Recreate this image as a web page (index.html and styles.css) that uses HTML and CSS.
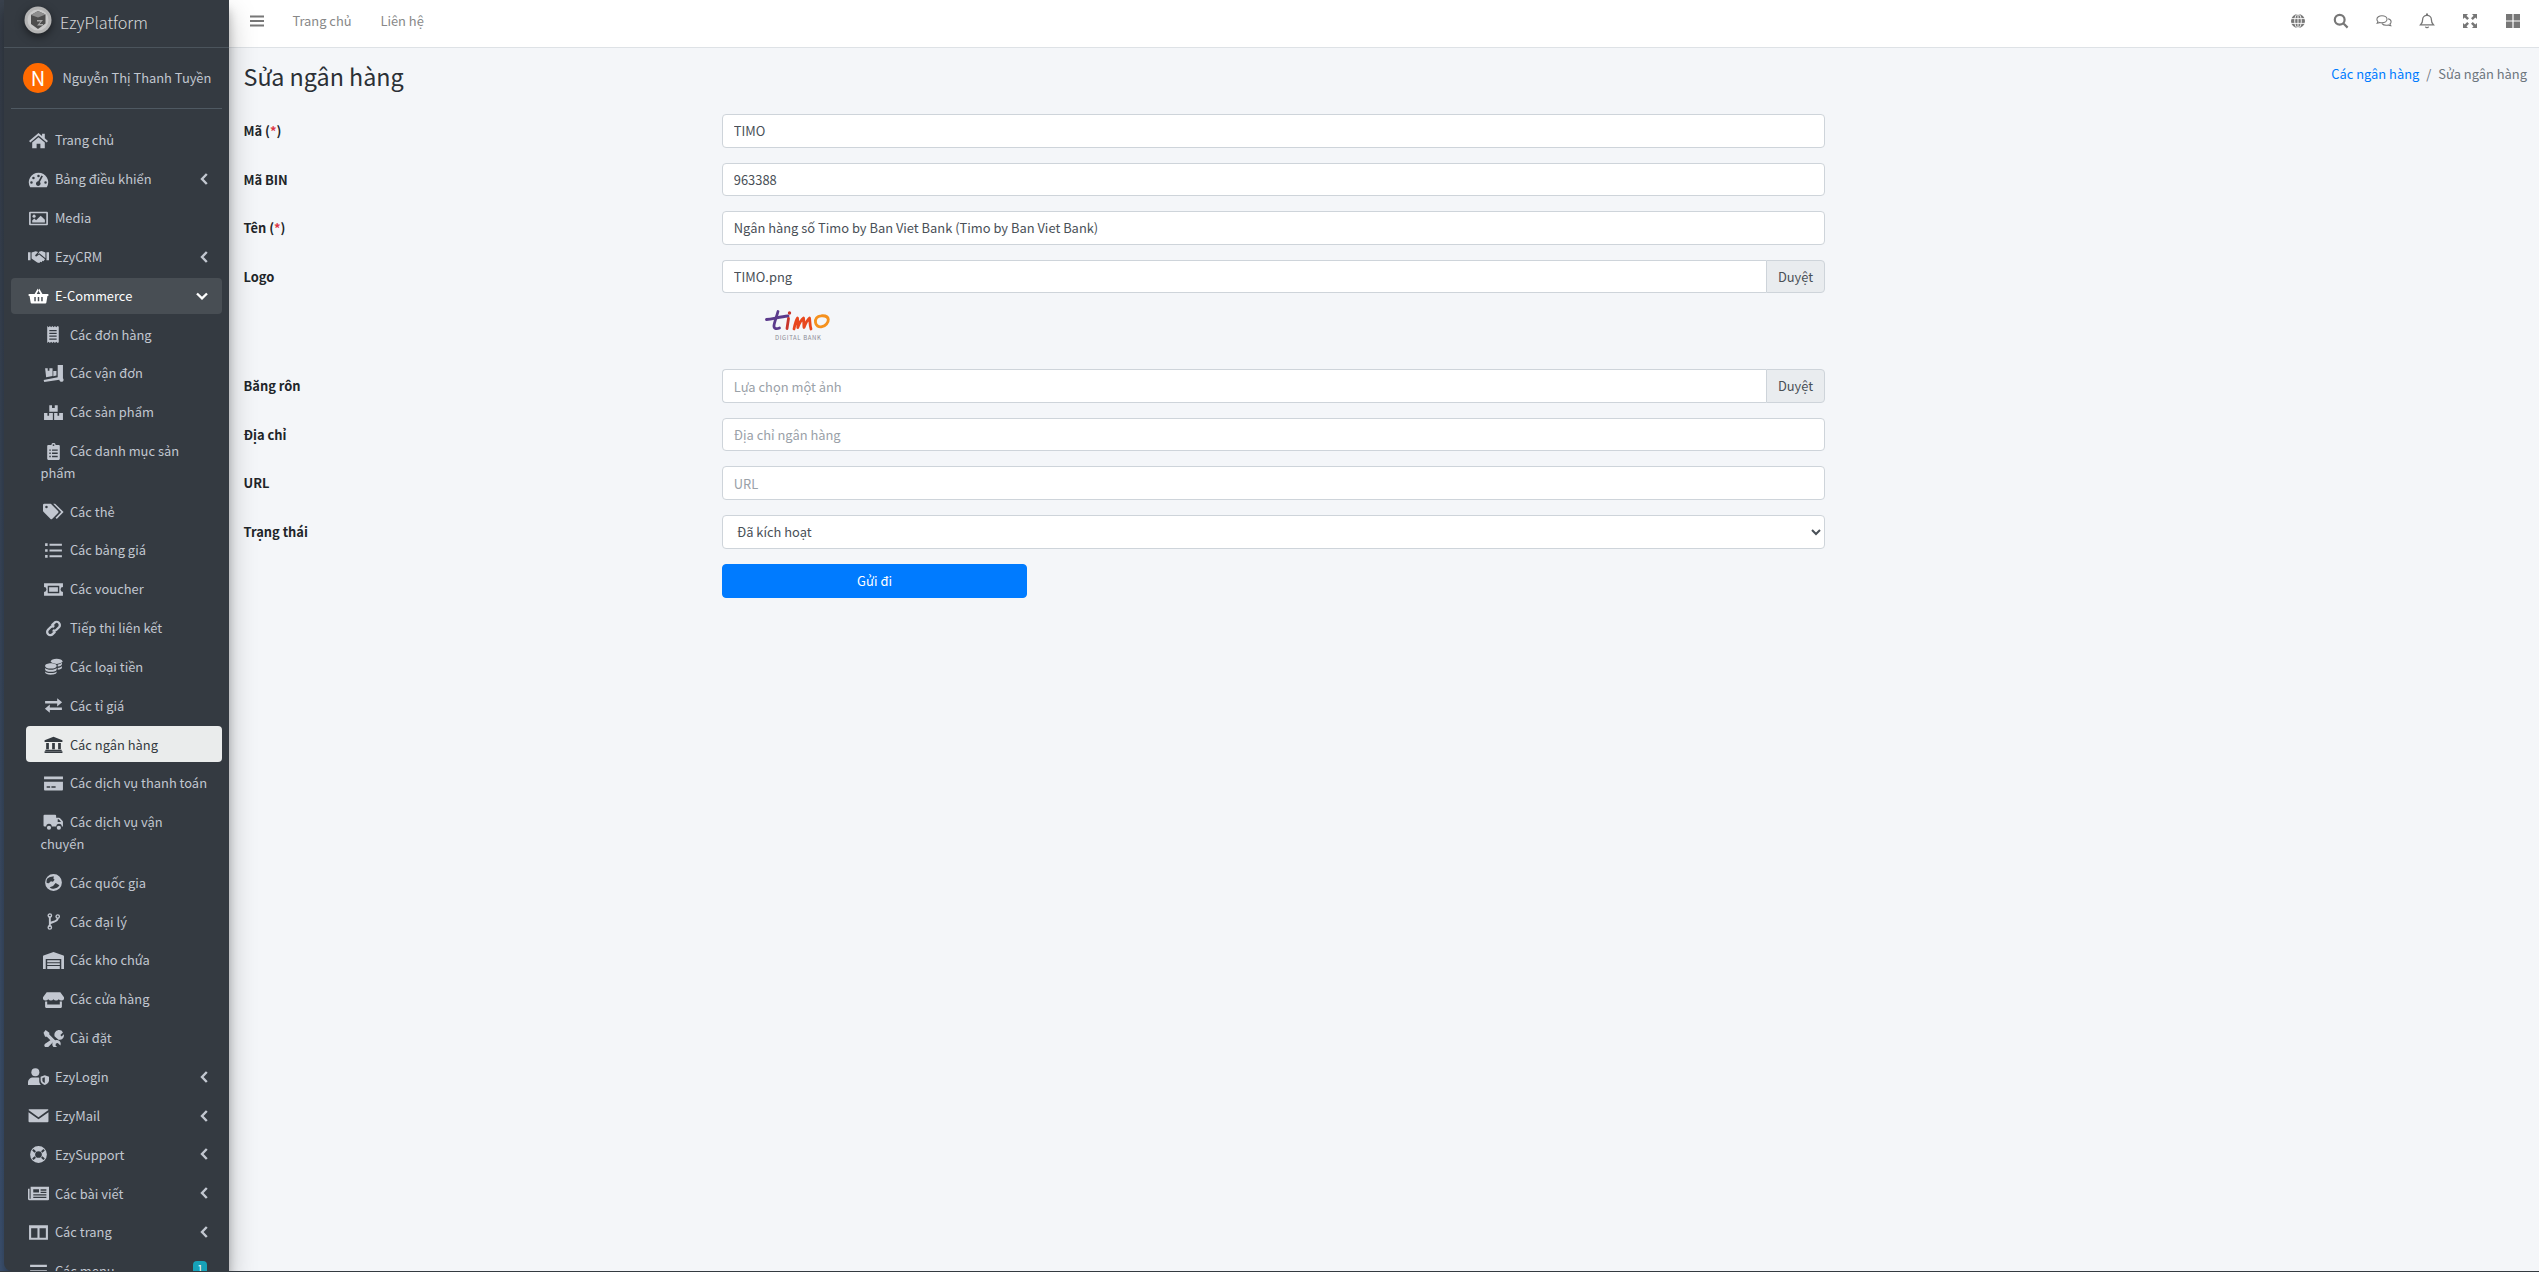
FILE: index.html
```html
<!DOCTYPE html>
<html lang="vi">
<head>
<meta charset="utf-8">
<title>Sửa ngân hàng</title>
<link rel="stylesheet" href="styles.css">
</head>
<body>
<svg class="defs" aria-hidden="true">
<defs>
<symbol id="i-home" viewBox="0 0 20 16"><path d="M10 0.8 1 8.4l1.2 1.4L10 3.2l7.8 6.6L19 8.4l-3-2.5V1.6h-2.6v2.1z"/><path d="M4 10 10 4.9l6 5.1v5.4h-4.2v-4.4H8.2v4.4H4z"/></symbol>
<symbol id="i-gauge" viewBox="0 0 20 16"><path fill-rule="evenodd" d="M10 1.5a9.2 9.2 0 0 0-7.9 13.9h15.8A9.2 9.2 0 0 0 10 1.5zM10 3.4a1.2 1.2 0 1 1 0 2.4 1.2 1.2 0 0 1 0-2.4zM5.2 5.3a1.2 1.2 0 1 1 0 2.4 1.2 1.2 0 0 1 0-2.4zM3.3 9.7a1.2 1.2 0 1 1 0 2.4 1.2 1.2 0 0 1 0-2.4zM16.7 9.7a1.2 1.2 0 1 1 0 2.4 1.2 1.2 0 0 1 0-2.4zM14.2 5 11.3 10.3a2.2 2.2 0 1 1-1.5-.6l3-5.4z"/></symbol>
<symbol id="i-image" viewBox="0 0 20 16"><path fill-rule="evenodd" d="M2 1.5h16a1 1 0 0 1 1 1v11a1 1 0 0 1-1 1H2a1 1 0 0 1-1-1v-11a1 1 0 0 1 1-1zM2.6 3.1v9.8h14.8V3.1z"/><circle cx="5.8" cy="5.8" r="1.5"/><path d="M4 11.700V9.800L6 8l1.700 1.600 4.400-4.300 4 4v2.400z"/></symbol>
<symbol id="i-hands" viewBox="0 0 20 16"><path d="M0 4h2.400v7.600H0zM17.600 4H20v7.600h-2.400z"/><path d="M3.400 4.200 7.400 3l2.200.8-2.600 2.700c-.6.8.5 1.800 1.300 1.200L10.600 6l5.600 4.600-1.500 2-1-.6-.6 1.400-1.400-.4-.9 1.200-2-.5-5.400-3.700z"/><path d="M11 3.200l2-.4 3.600 1.400v5.400l-5.800-4.800-1.600 1.300z"/></symbol>
<symbol id="i-basket" viewBox="0 0 20 16"><path d="M6 7 9.200 1.500l1.400.8L8 7zM14 7l-3.200-5.500-1.400.8L12 7z"/><path fill-rule="evenodd" d="M.6 6.500h18.800v2H18.500l-1 6.200a1 1 0 0 1-1 .8H3.500a1 1 0 0 1-1-.8l-1-6.200H.6zM6 9.500v4h1.400v-4zM9.300 9.500v4h1.400v-4zM12.600 9.500v4H14v-4z"/></symbol>
<symbol id="i-receipt" viewBox="0 0 20 16"><path fill-rule="evenodd" d="M4 0l1.300 1L6.600 0l1.100 1L9 0l1.100 1L11.400 0l1.200 1L14 0l1 .6v14.800l-1 .6-1.400-1-1.200 1-1.300-1L9 16l-1.300-1-1.100 1-1.300-1L4 16zM6 3.600v1.200h7V3.600zM6 6.300v1.200h7V6.300zM6 9v1.200h7V9zM6 11.700v1.200h7v-1.200z"/></symbol>
<symbol id="i-dolly" viewBox="0 0 20 16"><path d="M14 0h5v12.500a2 2 0 1 1-3.400 1.400L1.200 16 .6 14.200l13.400-2.600z"/><path d="M2 3h2.500v2.400h1.600V3h3v7.400L3 11.600z"/><path d="M9.800 5.500h3v4.400l-3 .6z"/></symbol>
<symbol id="i-boxes" viewBox="0 0 20 16"><path d="M6 1h2.600v2.600h2.600V1H14v6.400H6zM1 8.400h3.200V11h1.600V8.400h3.600v6.800H1zM10.600 8.400h3.200V11h1.600V8.400H19v6.800h-8.400z"/></symbol>
<symbol id="i-clip" viewBox="0 0 20 16"><path fill-rule="evenodd" d="M8 1.800a2 2 0 0 1 4 0h3a1 1 0 0 1 1 1V15a1 1 0 0 1-1 1H5a1 1 0 0 1-1-1V2.800a1 1 0 0 1 1-1zM10 1a.9.9 0 1 0 0 1.800A.9.9 0 0 0 10 1zM6 6v1.400h1.400V6zM6 9v1.400h1.400V9zM6 12v1.400h1.400V12zM8.600 6v1.400H14V6zM8.600 9v1.400H14V9zM8.600 12v1.400H14V12z"/></symbol>
<symbol id="i-tags" viewBox="0 0 20 16"><path fill-rule="evenodd" d="M0 1.800A1.300 1.300 0 0 1 1.300.5h5.400c.4 0 .7.1 1 .4l6.600 6.600a1.300 1.300 0 0 1 0 1.900l-5.400 5.400a1.300 1.300 0 0 1-1.900 0L.4 8.200A1.300 1.300 0 0 1 0 7.300zM3.300 2.600a1.200 1.200 0 1 0 0 2.400 1.200 1.200 0 0 0 0-2.400z"/><path d="M9.700.5h1.100c.4 0 .7.1 1 .4l7.800 7.600-6.500 6.600-1.100-1.100 5.300-5.500z"/></symbol>
<symbol id="i-list" viewBox="0 0 20 16"><path d="M2 1.200h2.400v2.600H2zM2 6.700h2.400v2.600H2zM2 12.200h2.400v2.600H2zM6.200 1.600H18v1.800H6.200zM6.200 7.100H18v1.800H6.200zM6.200 12.600H18v1.800H6.200z"/></symbol>
<symbol id="i-ticket" viewBox="0 0 20 16"><path fill-rule="evenodd" d="M1 2h18v3.700a2.300 2.300 0 0 0 0 4.600V14H1v-3.700a2.300 2.300 0 0 0 0-4.600zM4.500 4.500v7h11v-7zM5.800 5.800h8.400v4.400H5.800z"/></symbol>
<symbol id="i-link" viewBox="0 0 20 16"><path fill="none" stroke="currentColor" stroke-width="2.200" d="M8.400 5 10.800 2.600a3 3 0 0 1 4.400 4.200l-2.400 2.400a3 3 0 0 1-3.600.5M11.600 11l-2.400 2.400a3 3 0 0 1-4.400-4.200l2.400-2.400a3 3 0 0 1 3.600-.5"/></symbol>
<symbol id="i-coins" viewBox="0 0 20 16"><ellipse cx="13" cy="3" rx="5.500" ry="2.500"/><path d="M2 7.500c0-1.500 2.500-2.500 5.500-2.500s5.500 1 5.500 2.500S10.500 10 7.500 10 2 9 2 7.500zM2 9.500c1 1 3 1.700 5.500 1.700s4.500-.7 5.500-1.700v1.300C13 12.200 10.500 13 7.500 13S2 12.200 2 10.800zM2 12.700c1 1 3 1.500 5.500 1.500s4.500-.5 5.500-1.500v.8c0 1.400-2.500 2.300-5.500 2.300S2 15 2 13.500zM14 6.300c1.700-.3 3-1 4-1.800v1.400c0 1-1.600 1.800-4 2.200zM14 9.500c1.700-.3 3-1 4-1.800v1.500c0 1-1.600 1.700-4 2z"/></symbol>
<symbol id="i-swap" viewBox="0 0 20 16"><path d="M2 3.700h11.500V1l4.700 4-4.700 4V6.200H2zM18 9.800H6.500V7L1.800 11l4.700 4v-2.700H18z"/></symbol>
<symbol id="i-bank" viewBox="0 0 20 16"><path d="M10 .5 18.500 4v1.500h-17V4zM3 6.500h2.600v6H3zM8.700 6.500h2.600v6H8.700zM14.400 6.500H17v6h-2.600zM2.200 13h15.600v1.200H2.200zM1.500 14.400h17V16h-17z"/></symbol>
<symbol id="i-card" viewBox="0 0 20 16"><path fill-rule="evenodd" d="M1 1.300h18v2.600H1zM1 6.400h18v7.400a.8.8 0 0 1-.8.8H1.800a.8.8 0 0 1-.8-.8zM3.500 10.500V12h3.300v-1.500zM8 10.500V12h4v-1.500z"/></symbol>
<symbol id="i-truck" viewBox="0 0 20 16"><path fill-rule="evenodd" d="M.5 1.500a1 1 0 0 1 1-1h10a1 1 0 0 1 1 1v2h2.800c.4 0 .7.2 1 .4l2.400 2.600c.2.300.3.600.3 1v4.300h-1.100a2.600 2.600 0 0 0-5.200 0H8.300a2.600 2.600 0 0 0-5.200 0H1.500a1 1 0 0 1-1-1zM14 5v2.600h3.200L15 5z"/><circle cx="5.700" cy="13" r="2"/><circle cx="15.100" cy="13" r="2"/></symbol>
<symbol id="i-globe" viewBox="0 0 20 16"><path fill-rule="evenodd" d="M10 0a8 8 0 1 0 0 16 8 8 0 0 0 0-16zM4 4.500C6 2.500 8.500 2 10.500 2.300L9.800 4 11 5.400 9.500 7.200 7.500 6.800 5.500 8.800 3.500 8.500C3.300 7 3.300 5.700 4 4.500zM12 8.500l3.600 2.200c-1.200 2-3 3-5.400 3.200-1.500 0-3-.4-3.800-1.400l3.200-1.200z"/></symbol>
<symbol id="i-branch" viewBox="0 0 20 16"><path fill="none" stroke="currentColor" stroke-width="1.800" d="M6.500 3v10M6.500 10.500c0-2.500 7.500-1.500 7.500-5.500"/><circle cx="6.500" cy="2.400" r="1.600" fill="none" stroke="currentColor" stroke-width="1.300"/><circle cx="6.500" cy="13.600" r="1.600" fill="none" stroke="currentColor" stroke-width="1.300"/><circle cx="14" cy="3.300" r="1.600" fill="none" stroke="currentColor" stroke-width="1.300"/></symbol>
<symbol id="i-ware" viewBox="0 0 20 16"><path fill-rule="evenodd" d="M10 0 19.500 3.300c.3.100.5.300.5.600V16h-2.600V6.500H2.600V16H0V3.900c0-.3.200-.5.500-.6zM4 7.800h12v1.800H4zM4 10.500h12v1.800H4zM4 13.200h12V16H4z"/></symbol>
<symbol id="i-store" viewBox="0 0 20 16"><path d="M3.500 1h13L20 5.800a2.600 2.600 0 0 1-2 3.200h-.5a3 3 0 0 1-2.500-1.300A3 3 0 0 1 12.500 9a3 3 0 0 1-2.500-1.300A3 3 0 0 1 7.500 9 3 3 0 0 1 5 7.700 3 3 0 0 1 2.500 9H2A2.600 2.600 0 0 1 0 5.800z"/><path d="M2 10h2v2.800h12V10h2v5a1 1 0 0 1-1 1H3a1 1 0 0 1-1-1z"/></symbol>
<symbol id="i-tools" viewBox="0 0 20 16"><path d="M2.500 0 6 2.500v1.700l5.500 5.500a3.800 3.800 0 0 1 5 5l-2.400-2.300-1.800.4-.4 1.800 2.300 2.300a3.800 3.800 0 0 1-5-5L3.700 6.400H2L.5 2.500z"/><path d="M15.500 0a4 4 0 0 1 3.500 2.200L16.500 4.700l1.300 1.300L19.700 4a4 4 0 0 1-4.900 5.100L12.500 7.300 11 5.800c-.7-2.900 1.300-5.800 4.500-5.800zM7.700 9.300 9.700 11.300 5 16.100a2.100 2.100 0 0 1-3-3z"/></symbol>
<symbol id="i-ushield" viewBox="0 0 20 16"><circle cx="7" cy="4" r="3.800"/><path d="M0 16v-2.300C0 11 2 9 5 9h4c.6 0 1.200.1 1.700.3v3c0 1.500.7 2.700 1.500 3.700z"/><path fill-rule="evenodd" d="M16 6.800 12 8.300v3.600c0 2 2 3.500 4 4.100 2-.6 4-2.100 4-4.100V8.300zM16 8.600v5.600c-1.200-.5-2.300-1.300-2.300-2.400V9.500z"/></symbol>
<symbol id="i-mail" viewBox="0 0 20 16"><path d="M1.500 2h17c.5 0 1 .3 1 .8L10 9.700.5 2.800c0-.5.5-.8 1-.8z"/><path d="M.5 4.800 10 11.500l9.500-6.700v8.700a1 1 0 0 1-1 1h-17a1 1 0 0 1-1-1z"/></symbol>
<symbol id="i-ring" viewBox="0 0 20 16"><path fill-rule="evenodd" d="M10 0a8 8 0 1 0 0 16 8 8 0 0 0 0-16zM10 4.800a3.200 3.200 0 1 1 0 6.400 3.200 3.200 0 0 1 0-6.400zM5.300 2.800 7.600 5 6.200 6.400 4 4.200C4.300 3.700 4.800 3.200 5.300 2.800zM14.700 2.800c.5.400 1 .9 1.300 1.400L13.800 6.400 12.400 5zM6.200 9.600 7.600 11l-2.300 2.200c-.5-.4-1-.9-1.300-1.400zM13.800 9.600 16 11.800c-.3.500-.8 1-1.300 1.400L12.400 11z"/></symbol>
<symbol id="i-news" viewBox="0 0 20 16"><path fill-rule="evenodd" d="M2.500 1.500H20v12a1 1 0 0 1-1 1H1.500A1.500 1.500 0 0 1 0 13V3.500h1.500V13h1zM5 4v3h5.500V4zM12 4v1.300h5.500V4zM12 6.300v1.300h5.500V6.300zM5 8.700V10h12.500V8.700zM5 11v1.300h12.500V11z"/></symbol>
<symbol id="i-cols" viewBox="0 0 20 16"><path fill-rule="evenodd" d="M1 1h18v14H1zM3 4v9h6V4zM11 4v9h6V4z"/></symbol>
<symbol id="i-bars" viewBox="0 0 20 16"><path d="M2 1.500h16v2.200H2zM2 6.900h16v2.200H2zM2 12.300h16v2.200H2z"/></symbol>
<symbol id="t-globe" viewBox="0 0 16 16"><path d="M8 1a7 7 0 1 0 0 14A7 7 0 0 0 8 1z"/><g fill="none" stroke="#fff" stroke-width=".9"><path d="M1 5.600h14M1 10.400h14M8 1v14"/><ellipse cx="8" cy="8" rx="3.300" ry="7"/></g></symbol>
<symbol id="t-search" viewBox="0 0 16 16"><path fill="none" stroke="currentColor" stroke-width="2.200" d="M6.700 1.800a4.900 4.900 0 1 0 0 9.800 4.900 4.900 0 0 0 0-9.800zM10.300 10.300l4.300 4.300"/></symbol>
<symbol id="t-chat" viewBox="0 0 18 16"><g fill="none" stroke="currentColor" stroke-width="1.200"><path d="M6.700 2C3.500 2 1 3.800 1 6.100c0 1 .5 1.900 1.200 2.600-.2.700-.6 1.400-1 1.900 1 0 2.100-.4 2.900-1 .8.300 1.700.5 2.600.5 3.200 0 5.700-1.800 5.700-4S9.900 2 6.700 2z"/><path d="M13.600 5.500c2 .5 3.400 1.800 3.400 3.400 0 1-.5 1.900-1.300 2.500.2.800.6 1.500 1 2-1 0-2.100-.4-2.900-1-.8.300-1.600.4-2.400.4-2 0-3.700-.7-4.600-1.900"/></g></symbol>
<symbol id="t-bell" viewBox="0 0 16 16"><g fill="none" stroke="currentColor" stroke-width="1.300"><path d="M8 2.300c-2.600 0-4.400 2-4.400 4.400 0 3.400-1.500 4.300-2.200 5.200h13.200c-.7-.9-2.200-1.800-2.200-5.200 0-2.400-1.800-4.400-4.400-4.400z"/><path d="M6.500 13.600c.2.700.8 1.100 1.500 1.100s1.300-.4 1.500-1.100"/></g><path d="M7 .6h2v2H7z"/></symbol>
<symbol id="t-expand" viewBox="0 0 16 16"><path d="M1 1h5L4.500 2.700 7 5.200 5.200 7 2.700 4.500 1 6zM15 1v5l-1.700-1.500L10.800 7 9 5.200l2.500-2.500L10 1zM1 15v-5l1.700 1.500L5.200 9 7 10.800l-2.500 2.500L6 15zM15 15h-5l1.500-1.700L9 10.800 10.800 9l2.500 2.500L15 10z"/></symbol>
<symbol id="t-grid" viewBox="0 0 16 16"><path d="M1 1h6.400v6.400H1zM8.600 1H15v6.400H8.600zM1 8.600h6.400V15H1zM8.600 8.600H15V15H8.600z"/></symbol>
<symbol id="c-left" viewBox="0 0 10 14"><path fill="none" stroke="currentColor" stroke-width="2.400" d="M7.800 2 3 7l4.800 5"/></symbol>
<symbol id="c-down" viewBox="0 0 14 10"><path fill="none" stroke="currentColor" stroke-width="2.400" d="M2 2.500 7 7.300l5-4.800"/></symbol>
</defs>
</svg>

<div class="app">
  <aside class="sidebar">
    <a class="brand">
      <svg class="brand-logo" viewBox="0 0 28 28" width="28" height="28"><circle cx="14" cy="14" r="13.500" fill="#b4b4b4"/><circle cx="14" cy="14" r="10.500" fill="#c9c9c9"/><path d="M14 5 21.500 8.500v9L14 23l-7-5V9z" fill="#4d4d4d"/><path d="M14 5 21.500 8.500 14 11.500 7 9z" fill="#8e8e8e"/><path d="M13 14h6l-3.500 4H19v1.500h-6l3.500-4H13z" fill="#a8a8a8"/></svg>
      <span class="brand-text">EzyPlatform</span>
    </a>
    <div class="user-panel">
      <span class="avatar">N</span>
      <span class="user-name">Nguyễn Thị Thanh Tuyền</span>
    </div>
    <ul class="nav">
      <li><a class="nav-link"><svg class="ic"><use href="#i-home"/></svg>Trang chủ</a></li>
      <li><a class="nav-link"><svg class="ic"><use href="#i-gauge"/></svg>Bảng điều khiển<svg class="chev"><use href="#c-left"/></svg></a></li>
      <li><a class="nav-link"><svg class="ic"><use href="#i-image"/></svg>Media</a></li>
      <li><a class="nav-link"><svg class="ic"><use href="#i-hands"/></svg>EzyCRM<svg class="chev"><use href="#c-left"/></svg></a></li>
      <li>
        <a class="nav-link open"><svg class="ic"><use href="#i-basket"/></svg>E-Commerce<svg class="chev-down"><use href="#c-down"/></svg></a>
        <ul class="subnav">
          <li><a class="nav-link"><svg class="ic"><use href="#i-receipt"/></svg>Các đơn hàng</a></li>
          <li><a class="nav-link"><svg class="ic"><use href="#i-dolly"/></svg>Các vận đơn</a></li>
          <li><a class="nav-link"><svg class="ic"><use href="#i-boxes"/></svg>Các sản phẩm</a></li>
          <li><a class="nav-link"><svg class="ic"><use href="#i-clip"/></svg>Các danh mục sản phẩm</a></li>
          <li><a class="nav-link"><svg class="ic"><use href="#i-tags"/></svg>Các thẻ</a></li>
          <li><a class="nav-link"><svg class="ic"><use href="#i-list"/></svg>Các bảng giá</a></li>
          <li><a class="nav-link"><svg class="ic"><use href="#i-ticket"/></svg>Các voucher</a></li>
          <li><a class="nav-link"><svg class="ic"><use href="#i-link"/></svg>Tiếp thị liên kết</a></li>
          <li><a class="nav-link"><svg class="ic"><use href="#i-coins"/></svg>Các loại tiền</a></li>
          <li><a class="nav-link"><svg class="ic"><use href="#i-swap"/></svg>Các tỉ giá</a></li>
          <li><a class="nav-link active"><svg class="ic"><use href="#i-bank"/></svg>Các ngân hàng</a></li>
          <li><a class="nav-link"><svg class="ic"><use href="#i-card"/></svg>Các dịch vụ thanh toán</a></li>
          <li><a class="nav-link"><svg class="ic"><use href="#i-truck"/></svg>Các dịch vụ vận chuyển</a></li>
          <li><a class="nav-link"><svg class="ic"><use href="#i-globe"/></svg>Các quốc gia</a></li>
          <li><a class="nav-link"><svg class="ic"><use href="#i-branch"/></svg>Các đại lý</a></li>
          <li><a class="nav-link"><svg class="ic"><use href="#i-ware"/></svg>Các kho chứa</a></li>
          <li><a class="nav-link"><svg class="ic"><use href="#i-store"/></svg>Các cửa hàng</a></li>
          <li><a class="nav-link"><svg class="ic"><use href="#i-tools"/></svg>Cài đặt</a></li>
        </ul>
      </li>
      <li><a class="nav-link"><svg class="ic"><use href="#i-ushield"/></svg>EzyLogin<svg class="chev"><use href="#c-left"/></svg></a></li>
      <li><a class="nav-link"><svg class="ic"><use href="#i-mail"/></svg>EzyMail<svg class="chev"><use href="#c-left"/></svg></a></li>
      <li><a class="nav-link"><svg class="ic"><use href="#i-ring"/></svg>EzySupport<svg class="chev"><use href="#c-left"/></svg></a></li>
      <li><a class="nav-link"><svg class="ic"><use href="#i-news"/></svg>Các bài viết<svg class="chev"><use href="#c-left"/></svg></a></li>
      <li><a class="nav-link"><svg class="ic"><use href="#i-cols"/></svg>Các trang<svg class="chev"><use href="#c-left"/></svg></a></li>
      <li><a class="nav-link"><svg class="ic"><use href="#i-bars"/></svg>Các menu<span class="badge">1</span></a></li>
    </ul>
  </aside>

  <div class="main">
    <header class="topbar">
      <nav class="top-left">
        <svg class="top-burger" viewBox="0 0 14 12" width="14" height="12"><path d="M0 .6h14v2H0zM0 5h14v2H0zM0 9.400h14v2H0z"/></svg>
        <a class="top-link">Trang chủ</a>
        <a class="top-link">Liên hệ</a>
      </nav>
      <div class="top-right">
        <svg class="top-ic"><use href="#t-globe"/></svg>
        <svg class="top-ic"><use href="#t-search"/></svg>
        <svg class="top-ic"><use href="#t-chat"/></svg>
        <svg class="top-ic"><use href="#t-bell"/></svg>
        <svg class="top-ic"><use href="#t-expand"/></svg>
        <svg class="top-ic"><use href="#t-grid"/></svg>
      </div>
    </header>

    <main class="content">
      <div class="content-head">
        <h1 class="title">Sửa ngân hàng</h1>
        <ol class="crumbs">
          <li><a class="crumb-link">Các ngân hàng</a></li>
          <li class="crumb-sep">/</li>
          <li class="crumb-now">Sửa ngân hàng</li>
        </ol>
      </div>
      <form class="form">
        <div class="row">
          <label class="label">Mã (<span class="req">*</span>)</label>
          <div class="field"><input class="input" value="TIMO"></div>
        </div>
        <div class="row">
          <label class="label">Mã BIN</label>
          <div class="field"><input class="input" value="963388"></div>
        </div>
        <div class="row">
          <label class="label">Tên (<span class="req">*</span>)</label>
          <div class="field"><input class="input" value="Ngân hàng số Timo by Ban Viet Bank (Timo by Ban Viet Bank)"></div>
        </div>
        <div class="row">
          <label class="label">Logo</label>
          <div class="field">
            <div class="input-group"><input class="input joined" value="TIMO.png"><span class="browse">Duyệt</span></div>
            <div class="logo-box">
              <svg class="logo" viewBox="0 0 66 24" width="66" height="24">
                <g fill="none" stroke-linecap="round" stroke-linejoin="round" stroke-width="2.800">
                  <path d="M1.500 10.500C8 9.500 16 8 23 7" stroke="#5b3a8c"/>
                  <path d="M13 2.500C11.500 8 9.500 13 9 16.500c-.3 3 2 4 5.500 2.500" stroke="#5b3a8c"/>
                  <path d="M23.500 9.500 22 19.500" stroke="#c8352b"/>
                  <path d="M29 20C30 15 31 11 32.500 9c.5 3.500.5 7 .3 9.500C34.500 14 36.500 10.500 38.500 9c.6 3.500 0 7 .5 9.500C40.800 14 42.500 10.500 44.500 9c.6 3.500.2 7 1.500 11" stroke="#e8471d"/>
                  <path d="M56 6.800C52 7 50 10 50.500 13.500c.4 3 3 5 6.500 4.200 3.500-.8 6.500-4 6.300-7.200C63 7.500 59.500 6.500 56 6.800z" stroke="#f5911e"/>
                </g>
                <circle cx="24.500" cy="4" r="1.700" fill="#c8352b"/>
              </svg>
              <span class="logo-caption">DIGITAL BANK</span>
            </div>
          </div>
        </div>
        <div class="row">
          <label class="label">Băng rôn</label>
          <div class="field"><div class="input-group"><input class="input joined" placeholder="Lựa chọn một ảnh"><span class="browse">Duyệt</span></div></div>
        </div>
        <div class="row">
          <label class="label">Địa chỉ</label>
          <div class="field"><input class="input" placeholder="Địa chỉ ngân hàng"></div>
        </div>
        <div class="row">
          <label class="label">URL</label>
          <div class="field"><input class="input" placeholder="URL"></div>
        </div>
        <div class="row">
          <label class="label">Trạng thái</label>
          <div class="field"><select class="input select"><option>Đã kích hoạt</option></select></div>
        </div>
        <div class="row">
          <span class="label"></span>
          <div class="field"><button type="button" class="submit">Gửi đi</button></div>
        </div>
      </form>
    </main>
  </div>
</div>
</body>
</html>
```

FILE: styles.css
```css
html, body {
  margin: 0;
  padding: 0;
  height: 100%;
}
body {
  background: #343a40;
  overflow: hidden;
  font-family: "Noto Sans CJK SC", "Noto Sans", sans-serif;
  font-size: 12.9px;
  line-height: 21.6px;
  color: #212529;
}
.defs {
  display: none;
}
a {
  text-decoration: none;
}
ul, ol {
  list-style: none;
  margin: 0;
  padding: 0;
}

.app {
  display: flex;
  height: 1271px;
  padding-left: 4px;
  background: linear-gradient(#3a424d, #42597a);
  overflow: hidden;
}

/* sidebar */
.sidebar {
  position: relative;
  z-index: 2;
  flex: none;
  width: 225px;
  height: 1271px;
  overflow: hidden;
  background: #343a41;
  border-bottom-left-radius: 8px;
  box-shadow: 0 14px 28px rgba(0,0,0,.25), 0 10px 10px rgba(0,0,0,.22);
  color: #c2c7d0;
}
.brand {
  display: flex;
  align-items: center;
  height: 47px;
  padding-left: 20px;
  border-bottom: 1px solid #4b545c;
}
.brand-logo {
  flex: none;
  margin-top: -7px;
  filter: drop-shadow(0 3px 4px rgba(0,0,0,.5));
}
.brand-text {
  margin-left: 8px;
  margin-top: -2px;
  font-size: 16.2px;
  font-weight: 300;
  color: rgba(255,255,255,.8);
}
.user-panel {
  display: flex;
  align-items: center;
  height: 60px;
  margin: 0 7px;
  padding-left: 12px;
  border-bottom: 1px solid #4f5962;
}
.avatar {
  flex: none;
  width: 30px;
  height: 30px;
  border-radius: 50%;
  background: #ff6a00;
  color: #fff;
  font-size: 20px;
  line-height: 30px;
  text-align: center;
}
.user-name {
  margin-left: 9.5px;
  white-space: nowrap;
}
.nav {
  padding: 13.2px 7px 0;
}
.nav-link {
  position: relative;
  display: block;
  padding: 7.2px 13.4px 7.2px 14.4px;
  margin-bottom: 2.88px;
  border-radius: 4px;
  color: #c2c7d0;
}
.ic {
  width: 21px;
  height: 17px;
  margin-left: 2.5px;
  margin-right: 6px;
  vertical-align: -3.5px;
  fill: currentColor;
}
.nav-link.open {
  background: rgba(255,255,255,.1);
  color: #fff;
}
.nav-link.active {
  background: #eaecec;
  color: #343a40;
}
.subnav {
  padding-left: 15px;
}
.chev {
  position: absolute;
  right: 13.5px;
  top: 11px;
  width: 10px;
  height: 14px;
}
.chev-down {
  position: absolute;
  right: 13px;
  top: 13px;
  width: 14px;
  height: 10px;
}
.badge {
  position: absolute;
  right: 15px;
  top: 8px;
  width: 14px;
  height: 16px;
  border-radius: 4px;
  background: #17a2b8;
  color: #fff;
  font-size: 10px;
  line-height: 16px;
  text-align: center;
}

/* main */
.main {
  flex: 1;
  min-width: 0;
  background: #f4f6f9;
}
.topbar {
  display: flex;
  justify-content: space-between;
  align-items: center;
  box-sizing: border-box;
  height: 48px;
  padding-bottom: 5px;
  background: #fff;
  border-bottom: 1px solid #dee2e6;
}
.top-left {
  display: flex;
  align-items: center;
  padding-left: 21px;
}
.top-burger {
  fill: #777;
  margin-right: 14px;
}
.top-link {
  padding: 0 14.4px;
  color: #888;
}
.top-right {
  display: flex;
  align-items: center;
  gap: 27px;
  padding-right: 18.5px;
}
.top-ic {
  width: 16px;
  height: 16px;
  color: #777;
  fill: currentColor;
}

.content {
  padding: 12.5px 12px 0 14.5px;
}
.content-head {
  display: flex;
  justify-content: space-between;
  margin-bottom: 22.5px;
}
.title {
  margin: 0;
  font-size: 23.3px;
  font-weight: 400;
  line-height: 31px;
  color: #2b3036;
}
.crumbs {
  display: flex;
  gap: 7px;
  line-height: 26px;
}
.crumb-link {
  color: #007bff;
}
.crumb-sep,
.crumb-now {
  color: #6c757d;
}

.row {
  display: grid;
  grid-template-columns: 478.5px 1103px;
  margin-bottom: 14.98px;
}
.label {
  font-weight: 700;
  line-height: 33px;
}
.req {
  color: #dc3545;
}
.input {
  display: block;
  box-sizing: border-box;
  width: 100%;
  height: 33.6px;
  padding: 0 10.8px;
  border: 1px solid #ced4da;
  border-radius: 4px;
  background: #fff;
  color: #495057;
  font: inherit;
  outline: none;
}
.input::placeholder {
  color: #9aa1a8;
}
.select {
  padding-left: 10px;
}
.input-group {
  display: flex;
}
.joined {
  flex: 1;
  min-width: 0;
  border-radius: 4px 0 0 4px;
  border-right: 0;
}
.browse {
  flex: none;
  box-sizing: border-box;
  width: 59px;
  height: 33.6px;
  border: 1px solid #ced4da;
  border-radius: 0 4px 4px 0;
  background: #e9ecef;
  color: #495057;
  line-height: 31.6px;
  text-align: center;
}
.logo-box {
  display: flex;
  flex-direction: column;
  align-items: flex-start;
  box-sizing: border-box;
  height: 61px;
  padding: 16px 0 0 43px;
}
.logo {
  display: block;
}
.logo-caption {
  margin-left: 10px;
  font-size: 6px;
  line-height: 9px;
  letter-spacing: 0.6px;
  color: #8c8c96;
}
.submit {
  display: block;
  width: 305px;
  height: 34px;
  border: 1px solid #007bff;
  border-radius: 4px;
  background: #007bff;
  color: #fff;
  font: inherit;
  padding: 0;
}
```
